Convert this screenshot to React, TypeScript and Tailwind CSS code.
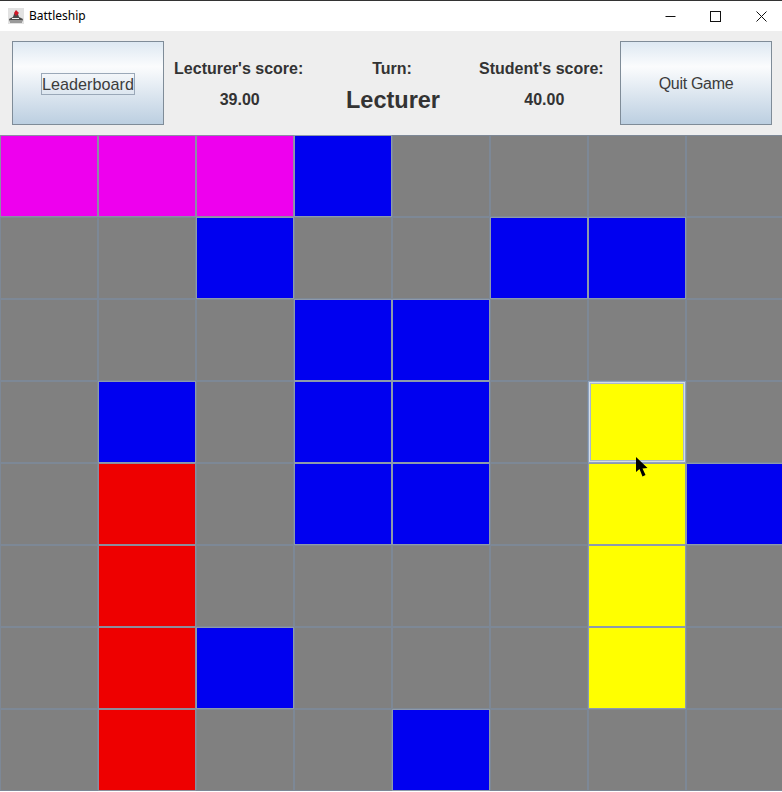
import React from 'react';

const G = 'g';
const B = 'b';
const M = 'm';
const R = 'r';
const Y = 'y';
const S = 's';

const board: string[][] = [
  [M, M, M, B, G, G, G, G],
  [G, G, B, G, G, B, B, G],
  [G, G, G, B, B, G, G, G],
  [G, B, G, B, B, G, S, G],
  [G, R, G, B, B, G, Y, B],
  [G, R, G, G, G, G, Y, G],
  [G, R, B, G, G, G, Y, G],
  [G, R, G, G, B, G, G, G],
];

const cellClass: Record<string, string> = {
  g: 'bg-[#808080] border-[#7d8896]',
  b: 'bg-[#0000f0] border-[#8d9aab]',
  m: 'bg-[#ee00ee] border-[#8d8ba5]',
  r: 'bg-[#ee0000] border-[#8d8d9b]',
  y: 'bg-[#ffff00] border-[#8d9aab]',
  s: 'bg-[#ffff00] border-[#8ea3c0] outline outline-1 -outline-offset-2 outline-[#d5dce6] shadow-[inset_0_0_0_2px_#a9b8cc]',
};

const AppIcon = () => (
  <svg width="16" height="16" viewBox="0 0 16 16">
    <rect x="0" y="0" width="16" height="16" fill="#e2e2e2" />
    <path d="M1 11 L5 9 L6 6 L8 3 L10 6 L11 9 L15 11 L14 14 L2 14 Z" fill="#4a4a4a" />
    <path d="M2 12 H14 V15 H2 Z" fill="#9a9a9a" />
    <path d="M8 2 L11 5 L8 8 L6 5 Z" fill="#d01828" />
    <rect x="4" y="10" width="7" height="1" fill="#f2f2f2" />
  </svg>
);

const GameButton = ({ children }: { children: React.ReactNode }) => (
  <button className="w-[152px] h-[84px] shrink-0 flex items-center justify-center pt-[1px] border border-[#7f8c98] bg-gradient-to-b from-[#dde8f2] via-[#fbfcfd] via-30% to-[#bccfe1] text-[#3c3c3c]">
    {children}
  </button>
);

const ScoreColumn = ({ label, value, big, labelClass, className }: { label: string; value: string; big?: boolean; labelClass: string; className?: string }) => (
  <div className={`flex-1 flex flex-col items-center font-bold text-[#333333] ${className ?? ''}`}>
    <div className={`h-[19px] leading-[19px] text-[16px] whitespace-nowrap ${labelClass}`}>{label}</div>
    {big ? (
      <div className="mt-[9px] h-[26px] leading-[26px] text-[23.5px]">{value}</div>
    ) : (
      <div className="mt-[13px] h-[18px] leading-[18px] text-[16px]">{value}</div>
    )}
  </div>
);

const App = (): JSX.Element => {
  return (
    <div className="relative w-[782px] h-[792px] overflow-hidden bg-white font-['Liberation_Sans',Arial,sans-serif]">
      <div className="h-px bg-[#333333]"></div>
      <div className="h-[30px] flex items-center bg-white">
        <div className="ml-[8px]">
          <AppIcon />
        </div>
        <span className="ml-[5px] text-[12px] text-black font-['Noto_Sans',sans-serif]">Battleship</span>
        <div className="ml-auto -mr-[2px] flex items-center">
          <div className="w-[44px] flex justify-center">
            <svg width="11" height="11" viewBox="0 0 11 11">
              <path d="M0.5 5.5 H10.5" stroke="#111" strokeWidth="1" />
            </svg>
          </div>
          <div className="w-[46px] flex justify-center">
            <svg width="11" height="11" viewBox="0 0 11 11">
              <rect x="0.5" y="0.5" width="10" height="10" fill="none" stroke="#111" strokeWidth="1" />
            </svg>
          </div>
          <div className="w-[46px] flex justify-center">
            <svg width="11" height="11" viewBox="0 0 11 11">
              <path d="M0.5 0.5 L10.5 10.5 M10.5 0.5 L0.5 10.5" stroke="#111" strokeWidth="1" />
            </svg>
          </div>
        </div>
      </div>
      <div className="h-[104px] flex items-start pl-[12px] pr-[10px] pt-[10px] bg-[#eeeeee]">
        <GameButton>
          <span className="border border-[#9aa8b8] leading-[20px] h-[22px] text-[16.2px]">Leaderboard</span>
        </GameButton>
        <div className="flex-1 flex pt-[18px]">
          <ScoreColumn label="Lecturer's score:" value="39.00" labelClass="pr-[2px]" className="pr-[2px]" />
          <ScoreColumn label="Turn:" value="Lecturer" big labelClass="pr-[2px]" />
          <ScoreColumn label="Student's score:" value="40.00" labelClass="pr-[6px]" />
        </div>
        <GameButton>
          <span className="text-[16px] tracking-[-0.3px]">Quit Game</span>
        </GameButton>
      </div>
      <div className="grid grid-cols-[repeat(8,98px)] grid-rows-[repeat(8,82px)] w-[784px]">
        {board.flatMap((row, r) =>
          row.map((cell, c) => (
            <div key={`${r}-${c}`} className={`border ${cellClass[cell]}`}></div>
          )),
        )}
      </div>
      {/* mouse pointer over the selected cell */}
      <svg className="absolute left-[635px] top-[457px]" width="14" height="21" viewBox="0 0 14 21">
        <path d="M1 0 L1 15 L4.5 12 L7.5 19.5 L10.5 18 L7.5 11.5 L12.5 11 Z" fill="#000" />
      </svg>
    </div>
  );
};

export default App;
